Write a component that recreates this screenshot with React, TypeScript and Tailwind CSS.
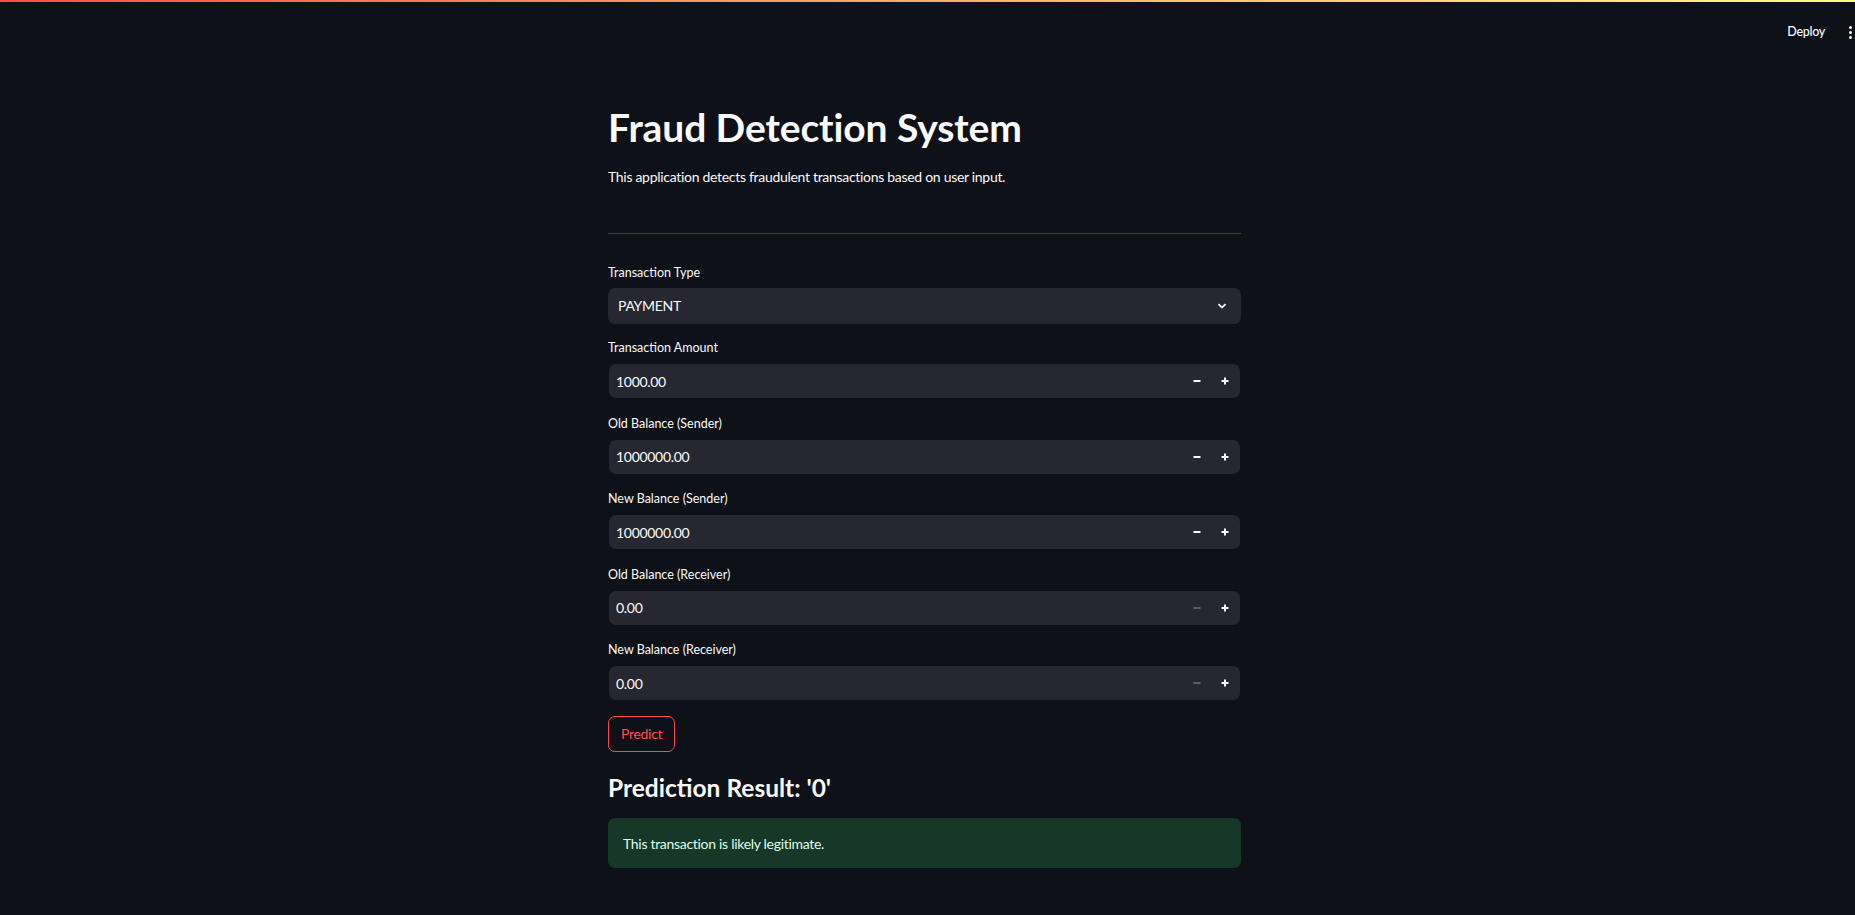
import type { JSX } from 'react';

// Streamlit-style fraud detection form (dark theme, 90% zoom look)

interface NumberField {
  label: string;
  value: string;
  canDecrease: boolean;
}

const FIELDS: NumberField[] = [
  { label: 'Transaction Amount', value: '1000.00', canDecrease: true },
  { label: 'Old Balance (Sender)', value: '1000000.00', canDecrease: true },
  { label: 'New Balance (Sender)', value: '1000000.00', canDecrease: true },
  { label: 'Old Balance (Receiver)', value: '0.00', canDecrease: false },
  { label: 'New Balance (Receiver)', value: '0.00', canDecrease: false },
];

const FONT = "font-['Lato','Open_Sans',sans-serif]";
const BODY = 'text-[14px] tracking-[-0.3px]';

function MinusIcon({ dim }: { dim: boolean }): JSX.Element {
  return (
    <svg width="10" height="10" viewBox="0 0 10 10" aria-hidden>
      <rect x="1.5" y="4" width="7" height="2" fill={dim ? '#5c5e66' : '#fafafa'} />
    </svg>
  );
}

function PlusIcon(): JSX.Element {
  return (
    <svg width="10" height="10" viewBox="0 0 10 10" aria-hidden>
      <rect x="1.5" y="4" width="7" height="2" fill="#fafafa" />
      <rect x="4" y="1.5" width="2" height="7" fill="#fafafa" />
    </svg>
  );
}

function Label({ children }: { children: string }): JSX.Element {
  return <div className="mb-[6px] h-[19px] text-[12.5px] leading-[19px] text-[#fafafa]">{children}</div>;
}

function NumberInput({ field }: { field: NumberField }): JSX.Element {
  return (
    <div>
      <Label>{field.label}</Label>
      <div className="h-[36px] p-px">
        <div className="flex h-full items-center rounded-[7px] bg-[#262730]">
          <span className={`flex-1 pl-[7px] text-[#fafafa] ${BODY}`}>{field.value}</span>
          <span className="flex h-full w-[28px] items-center justify-center">
            <MinusIcon dim={!field.canDecrease} />
          </span>
          <span className="mr-px flex h-full w-[28px] items-center justify-center">
            <PlusIcon />
          </span>
        </div>
      </div>
    </div>
  );
}

export default function App(): JSX.Element {
  return (
    <div className={`min-h-[915px] bg-[#0e1117] text-[#fafafa] ${FONT}`}>
      <div className="h-[2px] bg-gradient-to-r from-[#ff4b4b] to-[#fffd80]" />
      <header className="flex h-[60px] items-center justify-end">
        <span className="text-[12.5px] font-medium tracking-[-0.3px] text-[#fafafa]">Deploy</span>
        <span className="ml-[24px] mr-[3px] flex flex-col gap-[2px]">
          <span className="h-[3px] w-[3px] rounded-full bg-[#fafafa]" />
          <span className="h-[3px] w-[3px] rounded-full bg-[#fafafa]" />
          <span className="h-[3px] w-[3px] rounded-full bg-[#fafafa]" />
        </span>
      </header>

      <div className="flex justify-center pr-[6px]">
        <main className="w-[633px]">
          <h1 className="mt-[42px] text-[39px] font-bold leading-[1.2] tracking-[-0.1px]">Fraud Detection System</h1>
          <p className={`mt-[14px] leading-[24px] ${BODY}`}>
            This application detects fraudulent transactions based on user input.
          </p>
          <hr className="mt-[44px] border-0 border-t border-[#3d4044]" />

          <div className="mt-[29px] flex flex-col gap-[14.5px]">
            <div>
              <Label>Transaction Type</Label>
              <div className="flex h-[36px] items-center rounded-[7px] bg-[#262730] pl-[10px] pr-[13px]">
                <span className={`flex-1 ${BODY}`}>PAYMENT</span>
                <svg width="12" height="12" viewBox="0 0 12 12" aria-hidden>
                  <path d="M2.5 4.2 6 7.6 9.5 4.2" fill="none" stroke="#fafafa" strokeWidth="1.8" />
                </svg>
              </div>
            </div>

            {FIELDS.map((f) => (
              <NumberInput key={f.label} field={f} />
            ))}

            <div>
              <button
                type="button"
                className={`h-[36px] rounded-[7px] border border-[#ff4b4b] px-[12px] text-[#ff4b4b] ${BODY}`}
              >
                Predict
              </button>
            </div>
          </div>

          <h3 className="mt-[21px] text-[24.5px] font-bold leading-[1.2]">Prediction Result: '0'</h3>

          <div className={`mt-[16px] flex h-[50px] items-center rounded-[7px] bg-[#173828] pl-[15px] text-[#dffde9] ${BODY}`}>
            This transaction is likely legitimate.
          </div>
        </main>
      </div>
    </div>
  );
}
